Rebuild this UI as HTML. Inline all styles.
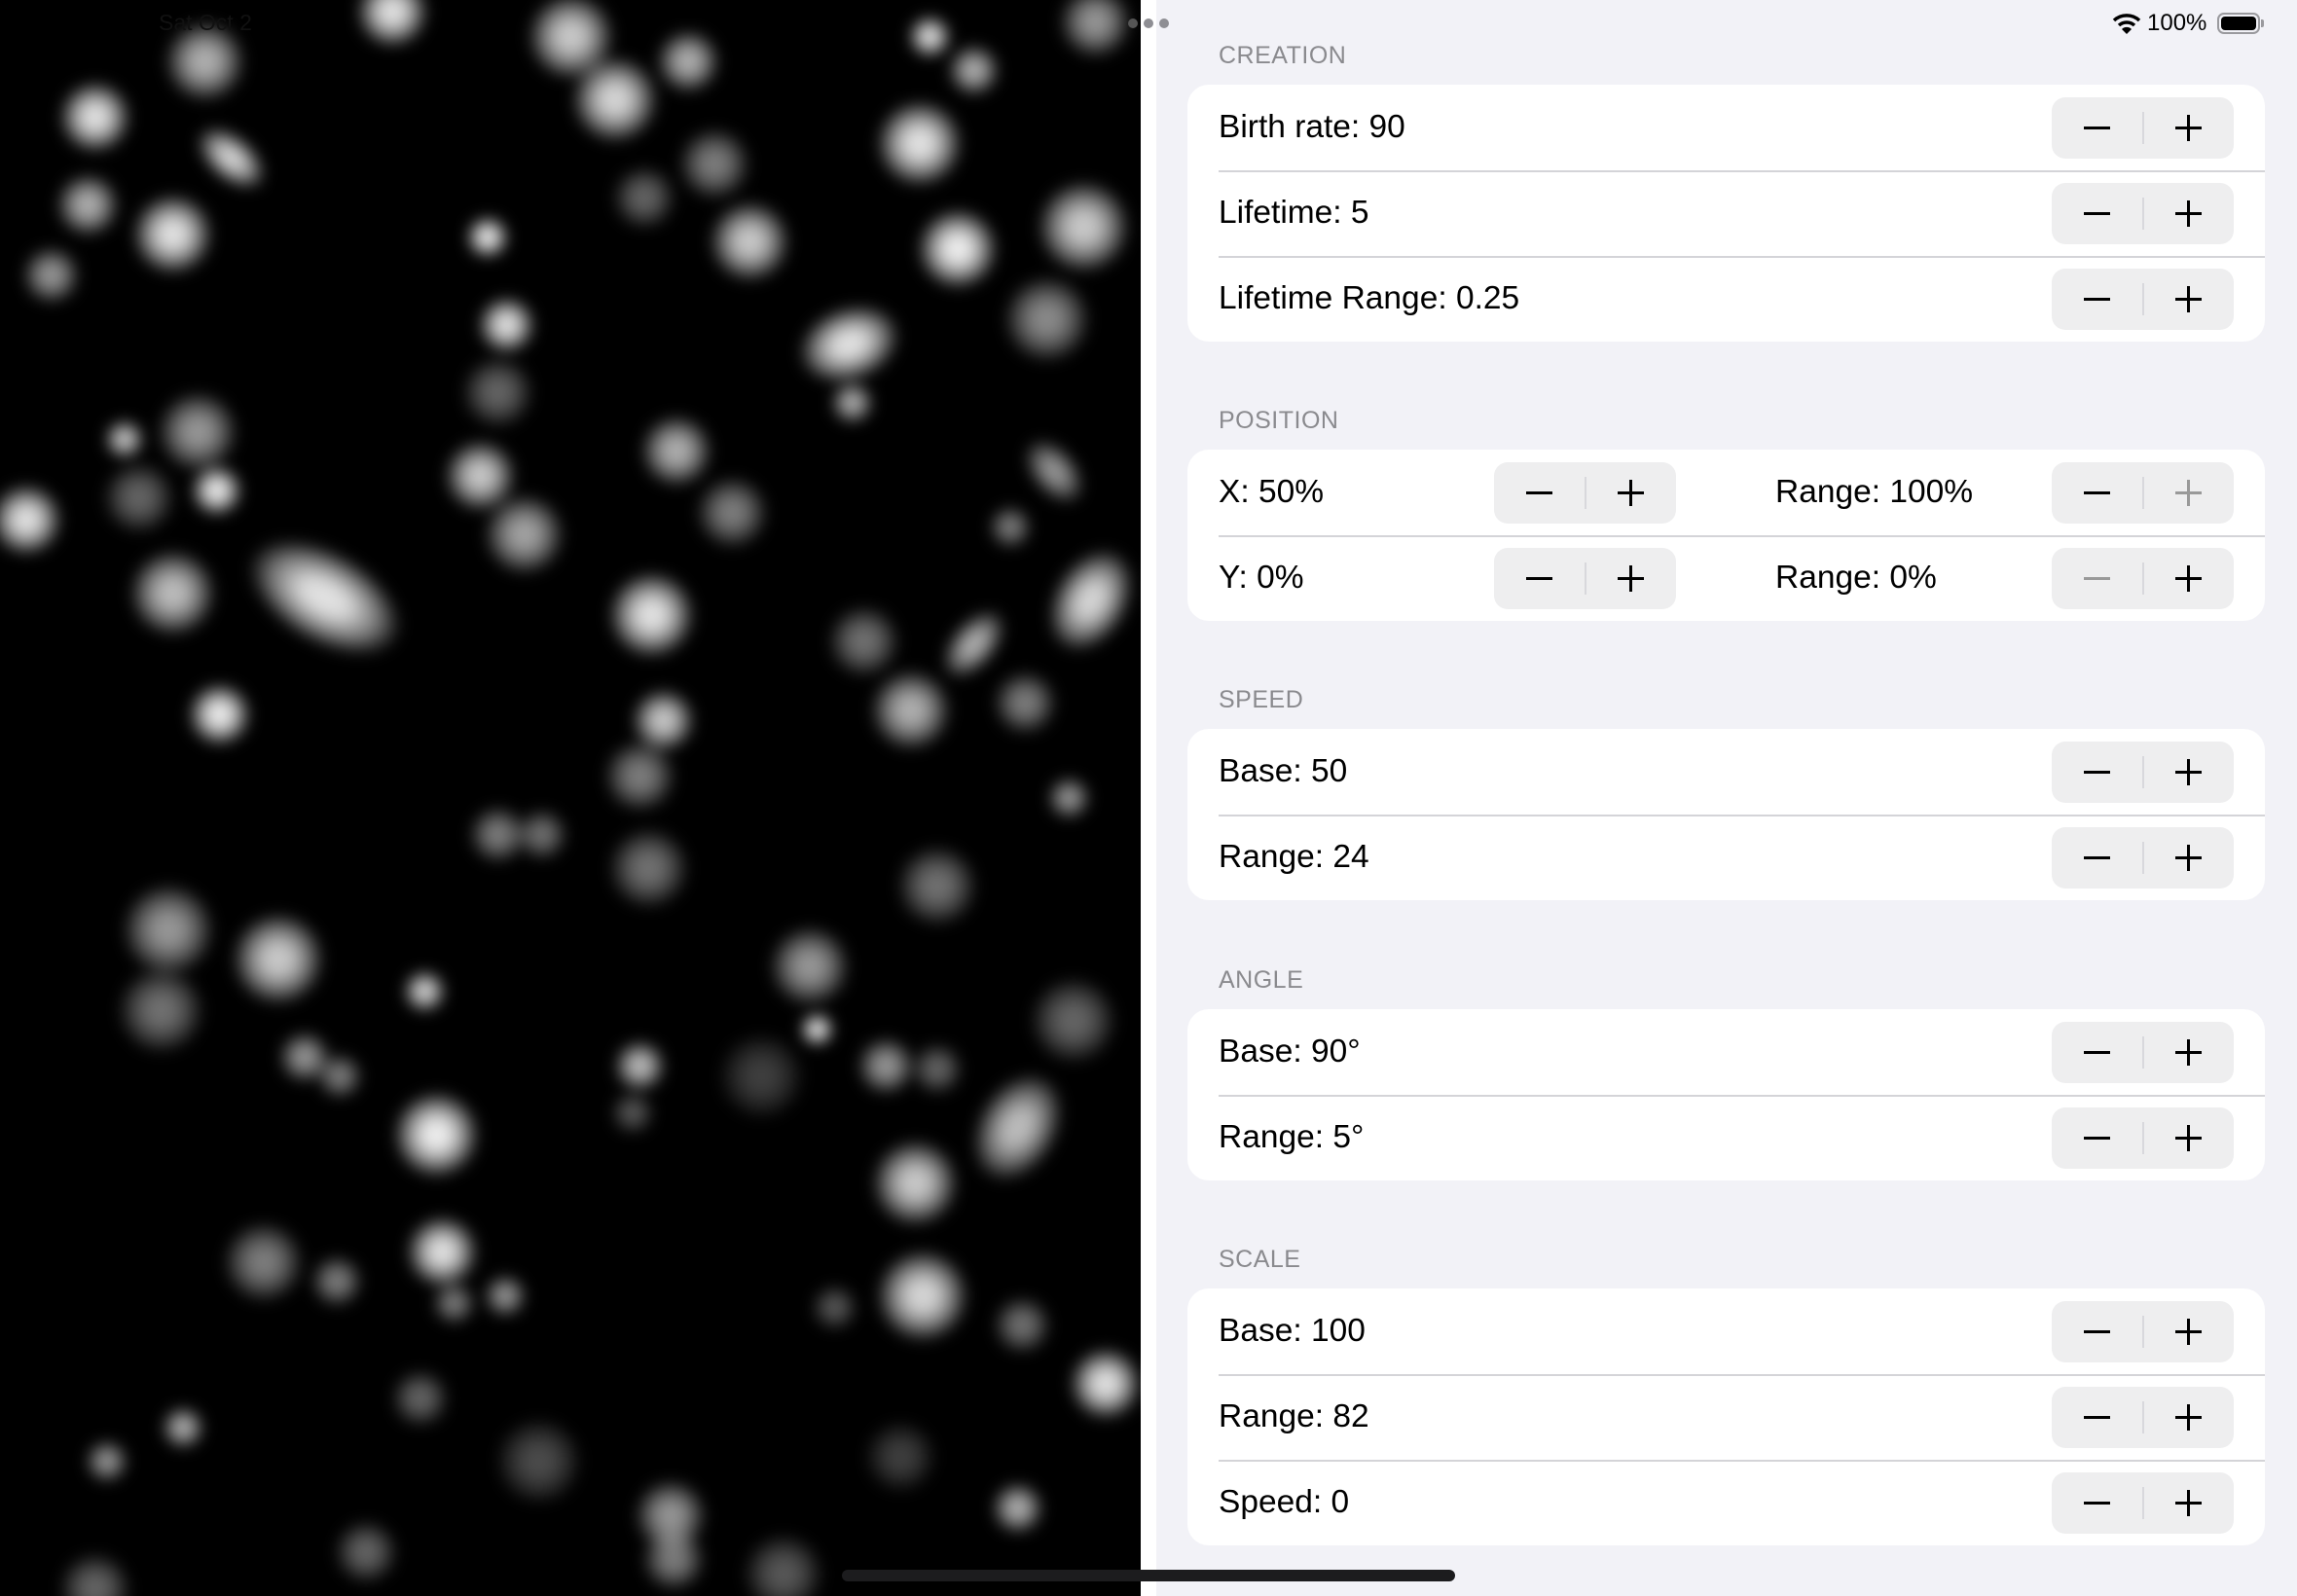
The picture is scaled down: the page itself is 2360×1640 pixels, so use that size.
<!DOCTYPE html>
<html><head><meta charset="utf-8"><style>
*{margin:0;padding:0;box-sizing:border-box}
body{width:2360px;height:1640px;overflow:hidden;background:#f2f2f7;font-family:"Liberation Sans",sans-serif;position:relative}
.left{position:absolute;left:0;top:0;width:1172px;height:1640px;background:#000;overflow:hidden}
.strip{position:absolute;left:1172px;top:0;width:16px;height:1640px;background:#fff}
.hdr{position:absolute;left:1252px;font-size:25px;color:#8a8a8e;letter-spacing:.5px}
.card{position:absolute;left:1220px;width:1107px;background:#fff;border-radius:22px}
.row{position:relative;height:88px}
.row+.row:before{content:"";position:absolute;left:32px;right:0;top:0;height:2px;background:#d4d4d8}
.lbl{position:absolute;left:32px;top:0;line-height:88px;font-size:33.5px;color:#000}
.st{position:absolute;top:13px;width:187px;height:63px;background:#eeeeef;border-radius:14px}
.st .dv{position:absolute;left:93px;top:15px;width:2px;height:33px;background:#d8d8dc}
.st .m{position:absolute;left:33px;top:30px;width:27px;height:3px;background:#000}
.st .p1{position:absolute;left:127px;top:30px;width:27px;height:3px;background:#000}
.st .p2{position:absolute;left:139px;top:18px;width:3px;height:27px;background:#000}
.st .g{background:#999}
</style></head><body>
<div class="left">
<svg width="1172" height="1640" viewBox="0 0 779 1090" preserveAspectRatio="none">
<defs><radialGradient id="g"><stop offset="0" stop-color="#fff"/><stop offset=".3" stop-color="#fff" stop-opacity=".95"/><stop offset=".7" stop-color="#fff" stop-opacity=".5"/><stop offset="1" stop-color="#fff" stop-opacity="0"/></radialGradient>
<filter id="b" x="-10%" y="-10%" width="120%" height="120%"><feGaussianBlur stdDeviation="5"/></filter></defs>
<g fill="url(#g)" filter="url(#b)">
<circle cx="268" cy="8" r="25" opacity=".9"/><circle cx="140" cy="42" r="28" opacity=".7"/><circle cx="65" cy="80" r="25" opacity=".9"/><ellipse cx="158" cy="108" rx="28" ry="16" transform="rotate(40 158 108)" opacity=".85"/><circle cx="60" cy="140" r="22" opacity=".7"/><circle cx="118" cy="160" r="28" opacity=".9"/><circle cx="35" cy="188" r="20" opacity=".6"/><circle cx="390" cy="25" r="30" opacity=".8"/><circle cx="420" cy="68" r="30" opacity=".85"/><circle cx="470" cy="42" r="22" opacity=".7"/><circle cx="635" cy="25" r="15" opacity=".9"/><circle cx="665" cy="48" r="18" opacity=".7"/><circle cx="748" cy="15" r="25" opacity=".6"/><circle cx="628" cy="98" r="30" opacity=".9"/><circle cx="488" cy="112" r="25" opacity=".5"/><circle cx="440" cy="135" r="22" opacity=".4"/><circle cx="512" cy="165" r="28" opacity=".8"/><circle cx="654" cy="170" r="28" opacity=".95"/><circle cx="740" cy="155" r="32" opacity=".8"/><circle cx="333" cy="162" r="15" opacity=".95"/><circle cx="346" cy="222" r="20" opacity=".9"/><circle cx="715" cy="218" r="30" opacity=".55"/><ellipse cx="580" cy="235" rx="36" ry="26" transform="rotate(-20 580 235)" opacity=".9"/><circle cx="582" cy="275" r="15" opacity=".7"/><circle cx="340" cy="268" r="25" opacity=".4"/><circle cx="135" cy="295" r="28" opacity=".6"/><circle cx="85" cy="300" r="14" opacity=".8"/><circle cx="148" cy="335" r="18" opacity=".95"/><circle cx="95" cy="340" r="25" opacity=".4"/><circle cx="18" cy="355" r="25" opacity=".9"/><circle cx="462" cy="308" r="25" opacity=".7"/><circle cx="328" cy="325" r="25" opacity=".8"/><circle cx="358" cy="365" r="28" opacity=".65"/><circle cx="500" cy="350" r="25" opacity=".5"/><ellipse cx="720" cy="322" rx="26" ry="16" transform="rotate(50 720 322)" opacity=".6"/><circle cx="690" cy="360" r="15" opacity=".5"/><ellipse cx="222" cy="408" rx="58" ry="32" transform="rotate(30 222 408)" opacity=".9"/><circle cx="118" cy="405" r="30" opacity=".75"/><circle cx="445" cy="420" r="30" opacity=".9"/><ellipse cx="745" cy="410" rx="26" ry="38" transform="rotate(30 745 410)" opacity=".85"/><circle cx="590" cy="438" r="25" opacity=".45"/><ellipse cx="665" cy="440" rx="28" ry="16" transform="rotate(-50 665 440)" opacity=".7"/><circle cx="622" cy="485" r="28" opacity=".7"/><circle cx="700" cy="480" r="22" opacity=".5"/><circle cx="453" cy="492" r="22" opacity=".8"/><circle cx="150" cy="488" r="22" opacity=".95"/><circle cx="730" cy="545" r="15" opacity=".6"/><circle cx="437" cy="530" r="25" opacity=".5"/><circle cx="340" cy="570" r="20" opacity=".5"/><circle cx="370" cy="570" r="18" opacity=".45"/><circle cx="443" cy="593" r="28" opacity=".45"/><circle cx="640" cy="605" r="28" opacity=".45"/><circle cx="115" cy="635" r="32" opacity=".6"/><circle cx="190" cy="655" r="32" opacity=".8"/><circle cx="110" cy="690" r="30" opacity=".45"/><circle cx="553" cy="660" r="28" opacity=".6"/><circle cx="290" cy="677" r="15" opacity=".85"/><circle cx="558" cy="703" r="12" opacity=".95"/><circle cx="733" cy="697" r="30" opacity=".4"/><circle cx="208" cy="722" r="18" opacity=".6"/><circle cx="232" cy="735" r="16" opacity=".5"/><circle cx="437" cy="728" r="18" opacity=".75"/><circle cx="432" cy="760" r="15" opacity=".35"/><circle cx="520" cy="735" r="30" opacity=".25"/><circle cx="605" cy="728" r="20" opacity=".6"/><circle cx="640" cy="730" r="18" opacity=".4"/><ellipse cx="695" cy="770" rx="28" ry="40" transform="rotate(30 695 770)" opacity=".75"/><circle cx="298" cy="775" r="30" opacity=".95"/><circle cx="625" cy="808" r="30" opacity=".8"/><circle cx="180" cy="862" r="28" opacity=".5"/><circle cx="230" cy="875" r="18" opacity=".5"/><circle cx="302" cy="855" r="25" opacity=".9"/><circle cx="310" cy="890" r="15" opacity=".5"/><circle cx="345" cy="885" r="15" opacity=".6"/><circle cx="630" cy="885" r="32" opacity=".85"/><circle cx="570" cy="893" r="16" opacity=".35"/><circle cx="698" cy="905" r="20" opacity=".45"/><circle cx="755" cy="945" r="25" opacity=".9"/><circle cx="287" cy="955" r="20" opacity=".4"/><circle cx="125" cy="975" r="15" opacity=".7"/><circle cx="73" cy="998" r="15" opacity=".6"/><circle cx="368" cy="998" r="30" opacity=".3"/><circle cx="615" cy="995" r="25" opacity=".25"/><circle cx="695" cy="1030" r="18" opacity=".7"/><circle cx="458" cy="1035" r="25" opacity=".6"/><circle cx="460" cy="1065" r="22" opacity=".5"/><circle cx="250" cy="1060" r="22" opacity=".4"/><circle cx="535" cy="1075" r="28" opacity=".35"/><circle cx="65" cy="1085" r="25" opacity=".4"/>
</g></svg>
<div style="position:absolute;left:163px;top:10px;font-size:23px;color:#111">Sat Oct 2</div>
</div>
<div class="strip"></div>
<div style="position:absolute;left:1159px;top:19px;width:10px;height:10px;border-radius:50%;background:#555"></div>
<div style="position:absolute;left:1175px;top:19px;width:10px;height:10px;border-radius:50%;background:#8e8e93"></div>
<div style="position:absolute;left:1191px;top:19px;width:10px;height:10px;border-radius:50%;background:#8e8e93"></div>

<svg style="position:absolute;left:2170px;top:12px" width="30" height="24" viewBox="0 0 30 24"><path d="M2 9 A19 19 0 0 1 28 9" stroke="#000" stroke-width="3.5" fill="none"/><path d="M7 14 A12 12 0 0 1 23 14" stroke="#000" stroke-width="3.5" fill="none"/><path d="M10 18 L15 23 L20 18 A7 7 0 0 0 10 18Z" fill="#000"/></svg>
<div style="position:absolute;left:2206px;top:10px;font-size:24px;color:#000">100%</div>
<div style="position:absolute;left:2278px;top:13px;width:44px;height:22px;border:2px solid #9a9a9e;border-radius:7px;padding:2px"><div style="width:100%;height:100%;background:#000;border-radius:4px"></div></div>
<div style="position:absolute;left:2323px;top:20px;width:3px;height:8px;background:#9a9a9e;border-radius:0 2px 2px 0"></div>

<div class="hdr" style="top:43px">CREATION</div>
<div class="card" style="top:87px">
<div class="row"><div class="lbl">Birth rate: 90</div><div class="st" style="right:32px"><div class="m"></div><div class="dv"></div><div class="p1"></div><div class="p2"></div></div></div>
<div class="row"><div class="lbl">Lifetime: 5</div><div class="st" style="right:32px"><div class="m"></div><div class="dv"></div><div class="p1"></div><div class="p2"></div></div></div>
<div class="row"><div class="lbl">Lifetime Range: 0.25</div><div class="st" style="right:32px"><div class="m"></div><div class="dv"></div><div class="p1"></div><div class="p2"></div></div></div>
</div>

<div class="hdr" style="top:418px">POSITION</div>
<div class="card" style="top:462px">
<div class="row"><div class="lbl">X: 50%</div><div class="st" style="left:315px"><div class="m"></div><div class="dv"></div><div class="p1"></div><div class="p2"></div></div><div class="lbl" style="left:604px">Range: 100%</div><div class="st" style="right:32px"><div class="m"></div><div class="dv"></div><div class="p1 g"></div><div class="p2 g"></div></div></div>
<div class="row"><div class="lbl">Y: 0%</div><div class="st" style="left:315px"><div class="m"></div><div class="dv"></div><div class="p1"></div><div class="p2"></div></div><div class="lbl" style="left:604px">Range: 0%</div><div class="st" style="right:32px"><div class="m g"></div><div class="dv"></div><div class="p1"></div><div class="p2"></div></div></div>
</div>

<div class="hdr" style="top:705px">SPEED</div>
<div class="card" style="top:749px">
<div class="row"><div class="lbl">Base: 50</div><div class="st" style="right:32px"><div class="m"></div><div class="dv"></div><div class="p1"></div><div class="p2"></div></div></div>
<div class="row"><div class="lbl">Range: 24</div><div class="st" style="right:32px"><div class="m"></div><div class="dv"></div><div class="p1"></div><div class="p2"></div></div></div>
</div>

<div class="hdr" style="top:993px">ANGLE</div>
<div class="card" style="top:1037px">
<div class="row"><div class="lbl">Base: 90°</div><div class="st" style="right:32px"><div class="m"></div><div class="dv"></div><div class="p1"></div><div class="p2"></div></div></div>
<div class="row"><div class="lbl">Range: 5°</div><div class="st" style="right:32px"><div class="m"></div><div class="dv"></div><div class="p1"></div><div class="p2"></div></div></div>
</div>

<div class="hdr" style="top:1280px">SCALE</div>
<div class="card" style="top:1324px">
<div class="row"><div class="lbl">Base: 100</div><div class="st" style="right:32px"><div class="m"></div><div class="dv"></div><div class="p1"></div><div class="p2"></div></div></div>
<div class="row"><div class="lbl">Range: 82</div><div class="st" style="right:32px"><div class="m"></div><div class="dv"></div><div class="p1"></div><div class="p2"></div></div></div>
<div class="row"><div class="lbl">Speed: 0</div><div class="st" style="right:32px"><div class="m"></div><div class="dv"></div><div class="p1"></div><div class="p2"></div></div></div>
</div>

<div style="position:absolute;left:865px;top:1613px;width:630px;height:12px;border-radius:6px;background:#1c1c1e"></div>
</body></html>
